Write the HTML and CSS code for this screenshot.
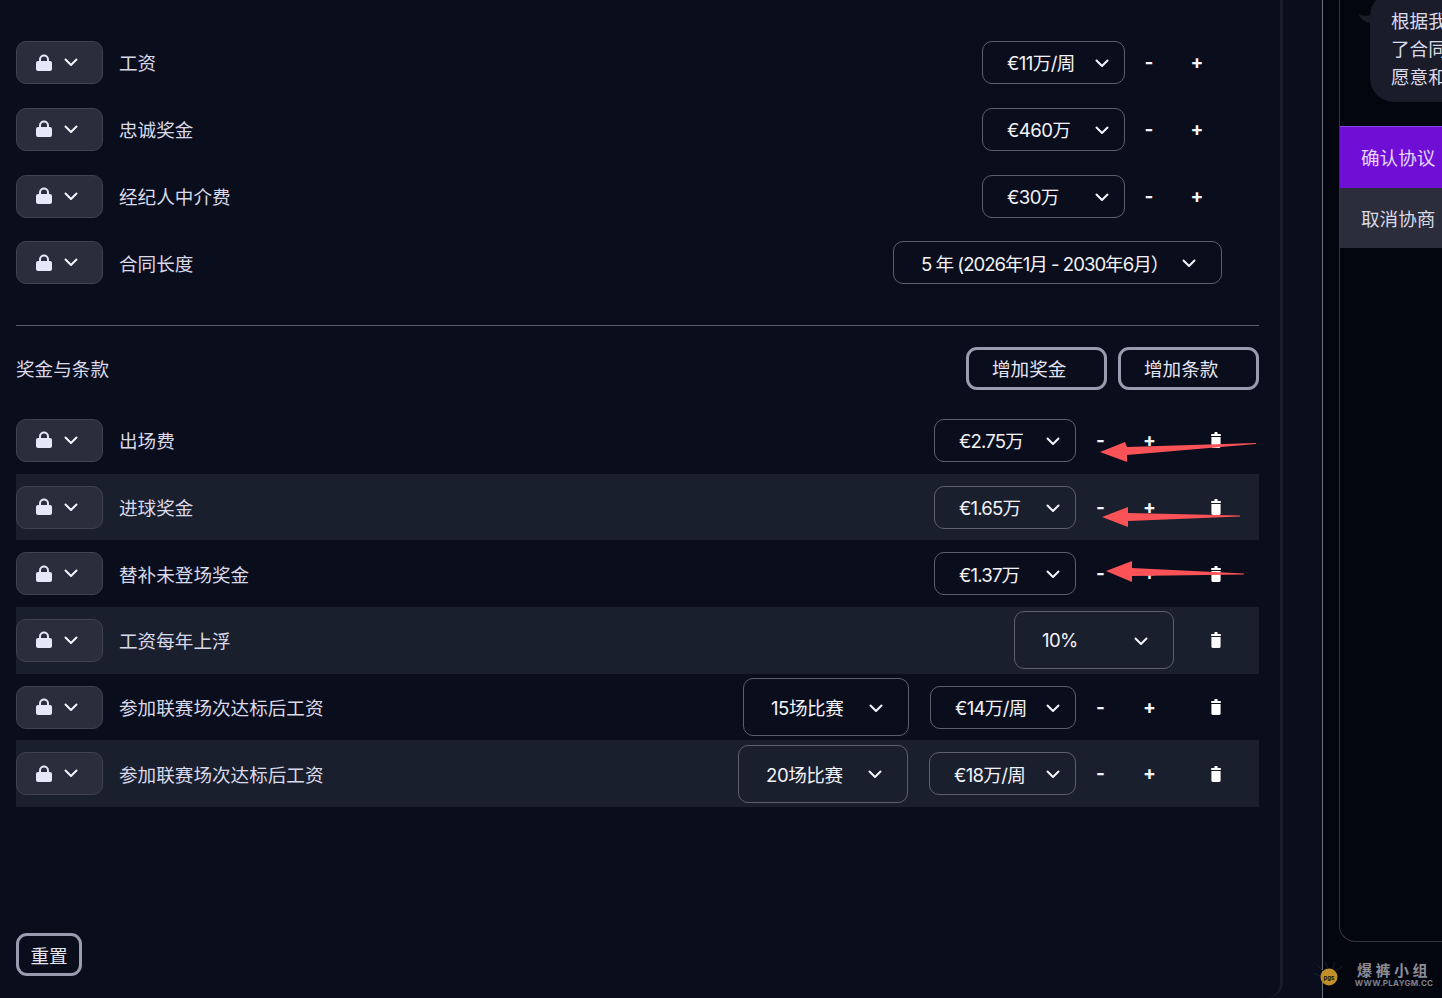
FILE: index.html
```html
<!DOCTYPE html>
<html>
<head>
    <meta charset="utf-8" />
    <title>合同协商</title>
    <meta name="viewport" content="width=device-width, initial-scale=1">
    <link rel="stylesheet" href="styles.css">
</head>
<body>
    <svg class="defs" width="0" height="0">
        <symbol id="i-lock" viewBox="0 0 16 17">
            <path d="M3 8V5.5a5 5 0 0 1 10 0V8h-2V5.5a3 3 0 0 0-6 0V8z" />
            <rect x="0" y="7" width="16" height="10" rx="2" />
        </symbol>
        <symbol id="i-chev" viewBox="0 0 14 9">
            <path d="M1.5 1.5L7 7l5.5-5.5" fill="none" stroke="currentColor" stroke-width="2" stroke-linecap="round" stroke-linejoin="round" />
        </symbol>
        <symbol id="i-trash" viewBox="0 0 10 16">
            <path d="M3.4 1Q3.4 0 4.2 0h1.6q.8 0 .8 1V2h3.2v2H.2V2h3.2z" />
            <path d="M.4 5h9.2v9.6q0 1.4-1.4 1.4H1.8q-1.4 0-1.4-1.4z" />
        </symbol>
    </svg>

    <div class="main">
        <div class="group">
            <div class="row">
                <button class="lock"><svg class="ic-lock"><use href="#i-lock" /></svg><svg class="ic-chev"><use href="#i-chev" /></svg></button>
                <div class="label first">工资</div>
                <div class="select w143"><span class="first">€11万/周</span><svg class="ic-chev"><use href="#i-chev" /></svg></div>
                <div class="step">-</div>
                <div class="step">+</div>
                <div class="end38"></div>
            </div>
            <div class="row">
                <button class="lock"><svg class="ic-lock"><use href="#i-lock" /></svg><svg class="ic-chev"><use href="#i-chev" /></svg></button>
                <div class="label">忠诚奖金</div>
                <div class="select w143"><span>€460万</span><svg class="ic-chev"><use href="#i-chev" /></svg></div>
                <div class="step">-</div>
                <div class="step">+</div>
                <div class="end38"></div>
            </div>
            <div class="row">
                <button class="lock"><svg class="ic-lock"><use href="#i-lock" /></svg><svg class="ic-chev"><use href="#i-chev" /></svg></button>
                <div class="label">经纪人中介费</div>
                <div class="select w143"><span>€30万</span><svg class="ic-chev"><use href="#i-chev" /></svg></div>
                <div class="step">-</div>
                <div class="step">+</div>
                <div class="end38"></div>
            </div>
            <div class="row">
                <button class="lock"><svg class="ic-lock"><use href="#i-lock" /></svg><svg class="ic-chev"><use href="#i-chev" /></svg></button>
                <div class="label">合同长度</div>
                <div class="select wide w329"><span>5 年 (2026年1月 - 2030年6月）</span><svg class="ic-chev"><use href="#i-chev" /></svg></div>
                <div class="end37"></div>
            </div>
        </div>

        <div class="divider"></div>

        <div class="bonus-head">
            <div class="label first">奖金与条款</div>
            <button class="outline add">增加奖金</button>
            <button class="outline add">增加条款</button>
        </div>

        <div class="group">
            <div class="row">
                <button class="lock"><svg class="ic-lock"><use href="#i-lock" /></svg><svg class="ic-chev"><use href="#i-chev" /></svg></button>
                <div class="label">出场费</div>
                <div class="select w142"><span>€2.75万</span><svg class="ic-chev"><use href="#i-chev" /></svg></div>
                <div class="step s49">-</div>
                <div class="step s49">+</div>
                <div class="del"><svg class="ic-trash"><use href="#i-trash" /></svg></div>
            </div>
            <div class="row alt">
                <button class="lock"><svg class="ic-lock"><use href="#i-lock" /></svg><svg class="ic-chev"><use href="#i-chev" /></svg></button>
                <div class="label">进球奖金</div>
                <div class="select w142"><span>€1.65万</span><svg class="ic-chev"><use href="#i-chev" /></svg></div>
                <div class="step s49">-</div>
                <div class="step s49">+</div>
                <div class="del"><svg class="ic-trash"><use href="#i-trash" /></svg></div>
            </div>
            <div class="row">
                <button class="lock"><svg class="ic-lock"><use href="#i-lock" /></svg><svg class="ic-chev"><use href="#i-chev" /></svg></button>
                <div class="label">替补未登场奖金</div>
                <div class="select w142"><span>€1.37万</span><svg class="ic-chev"><use href="#i-chev" /></svg></div>
                <div class="step s49">-</div>
                <div class="step s49">+</div>
                <div class="del"><svg class="ic-trash"><use href="#i-trash" /></svg></div>
            </div>
            <div class="row alt">
                <button class="lock"><svg class="ic-lock"><use href="#i-lock" /></svg><svg class="ic-chev"><use href="#i-chev" /></svg></button>
                <div class="label">工资每年上浮</div>
                <div class="select wide tall w160"><span>10%</span><svg class="ic-chev"><use href="#i-chev" /></svg></div>
                <div class="del"><svg class="ic-trash"><use href="#i-trash" /></svg></div>
            </div>
            <div class="row">
                <button class="lock"><svg class="ic-lock"><use href="#i-lock" /></svg><svg class="ic-chev"><use href="#i-chev" /></svg></button>
                <div class="label">参加联赛场次达标后工资</div>
                <div class="select wide tall w166"><span>15场比赛</span><svg class="ic-chev"><use href="#i-chev" /></svg></div>
                <div class="select w146"><span>€14万/周</span><svg class="ic-chev"><use href="#i-chev" /></svg></div>
                <div class="step s49">-</div>
                <div class="step s49">+</div>
                <div class="del"><svg class="ic-trash"><use href="#i-trash" /></svg></div>
            </div>
            <div class="row alt">
                <button class="lock"><svg class="ic-lock"><use href="#i-lock" /></svg><svg class="ic-chev"><use href="#i-chev" /></svg></button>
                <div class="label">参加联赛场次达标后工资</div>
                <div class="select wide tall w170"><span>20场比赛</span><svg class="ic-chev"><use href="#i-chev" /></svg></div>
                <div class="select w147"><span>€18万/周</span><svg class="ic-chev"><use href="#i-chev" /></svg></div>
                <div class="step s49">-</div>
                <div class="step s49">+</div>
                <div class="del"><svg class="ic-trash"><use href="#i-trash" /></svg></div>
            </div>
        </div>

        <button class="outline reset">重置</button>
    </div>

    <div class="gutter"></div>

    <div class="side">
        <div class="side-box">
            <div class="chat">
                <svg class="tail" width="14" height="9" viewBox="0 0 14 9"><path d="M0 0Q5 3 14 1V9Q5 9 0 0z" /></svg>
                <div class="bubble">根据我<br>了合同<br>愿意和</div>
            </div>
            <div class="action confirm">确认协议</div>
            <div class="action cancel">取消协商</div>
        </div>
    </div>

    <!-- 截图上的红色箭头 -->
    <svg class="marks" width="1442" height="998" viewBox="0 0 1442 998">
        <path d="M1100 452L1125 442L1127 447L1256 443V444L1127 455L1127 462z" />
        <path d="M1102 517L1128 507L1128 513L1240 515.500V516.500L1128 521L1128 527z" />
        <path d="M1106 571L1132 561L1132 568L1244 573.500V574.500L1132 576L1132 582z" />
    </svg>

    <div class="wm">
        <svg class="wm-coin" width="34" height="30" viewBox="0 0 34 30">
            <path class="wm-ray" d="M0 13l7 3M4 5l6 6M12 2l3 6M22 2l-2 6M30 6l-7 5" />
            <circle class="wm-ball" cx="16" cy="17" r="8.5" />
            <text class="wm-pgs" x="16" y="19.5" text-anchor="middle">pgs</text>
        </svg>
        <div class="wm-text">
            <div class="wm-cn">爆裤小组</div>
            <div class="wm-en">WWW.PLAYGM.CC</div>
        </div>
    </div>
</body>
</html>
```

FILE: styles.css
```css
*{
    margin: 0;
    padding: 0;
    box-sizing: border-box;
}
html,body{
    width: 1442px;
    height: 998px;
    overflow: hidden;
}
body{
    display: flex;
    background: #0a0e1c;
    color: #e4e4f2;
    font-family: "Inter", "Noto Sans CJK SC", sans-serif;
    font-size: 18.6px;
    position: relative;
}
button{
    font: inherit;
    color: inherit;
    background: none;
}
.defs{
    position: absolute;
}

/* left panel */
.main{
    width: 1283px;
    height: 998px;
    flex: none;
    display: flex;
    flex-direction: column;
    padding: 29.5px 21px 22px 16px;
    border-right: 3px solid #181d2b;
    border-bottom-right-radius: 16px;
}
.row{
    height: 66.67px;
    display: flex;
    align-items: center;
}
.alt{
    background: #1a1f2d;
}
.lock{
    width: 87px;
    height: 43px;
    flex: none;
    margin-right: 16px;
    display: flex;
    align-items: center;
    padding-left: 19px;
    gap: 12px;
    background: #2a2d3b;
    border: 1px solid #404250;
    border-radius: 10px;
}
.lock .ic-chev{
    margin-top: 0;
}
.ic-lock{
    width: 16px;
    height: 17px;
    margin-top: -1px;
    fill: #e7e7fa;
}
.ic-chev{
    width: 14px;
    height: 9px;
    margin-top: 2px;
    flex: none;
    color: #f4f4fb;
}
.ic-trash{
    width: 10px;
    height: 16px;
    fill: #fff;
}
.label{
    flex: 1;
    padding-bottom: 1px;
    color: #d9d9ea;
}
.select span{
    padding-bottom: 1px;
}
.label.first,
.select span.first{
    padding-bottom: 2px;
}
.select{
    height: 43px;
    flex: none;
    display: flex;
    align-items: center;
    justify-content: space-between;
    padding: 0 15px 0 24px;
    border: 1px solid #5d5f6e;
    border-radius: 10px;
    color: #f2f2f8;
    white-space: nowrap;
    letter-spacing: -0.6px;
}
.wide{
    padding: 0 25px 0 27px;
}
.tall{
    height: 58px;
}
.w142{ width: 142px; letter-spacing: -0.85px; }
.w143{ width: 143px; }
.w146{ width: 146px; margin-left: 21px; letter-spacing: -0.7px; }
.w147{ width: 147px; margin-left: 21px; letter-spacing: -0.7px; }
.w160{ width: 160px; }
.w166{ width: 166px; letter-spacing: -0.45px; }
.w170{ width: 170px; letter-spacing: -0.45px; }
.w329{ width: 329px; letter-spacing: -1px; }
.step{
    width: 48px;
    flex: none;
    text-align: center;
    font-size: 19px;
    font-weight: 700;
    color: #f4f4fb;
}
.s49{
    width: 49px;
}
.end38{
    width: 38px;
    flex: none;
}
.end37{
    width: 37px;
    flex: none;
}
.del{
    width: 84px;
    margin-right: 1px;
    flex: none;
    display: flex;
    justify-content: center;
}
.divider{
    height: 1px;
    margin-top: 29px;
    background: #5a5c6a;
}
.bonus-head{
    display: flex;
    align-items: center;
    gap: 11px;
    margin: 21px 0 17px;
}
.outline{
    height: 43px;
    border: 3px solid #9c9cb0;
    border-radius: 11px;
    color: #e4e4f2;
}
.add{
    width: 141px;
    padding: 0 0 2px 23px;
    text-align: left;
}
.reset{
    width: 66px;
    margin-top: auto;
    text-align: center;
}

/* right panel */
.gutter{
    width: 39px;
    flex: none;
}
.side{
    flex: 1;
    min-width: 0;
    padding-left: 16px;
    background: #04060f;
    border-left: 1px solid #6c6e7a;
}
.side-box{
    height: 942px;
    border-left: 1px solid #33353f;
    border-bottom: 1px solid #33353f;
    border-bottom-left-radius: 16px;
    overflow: hidden;
}
.chat{
    height: 126px;
    display: flex;
    flex-direction: column;
    padding-left: 30px;
    position: relative;
}
.tail{
    position: absolute;
    left: 18px;
    top: 14px;
    fill: #1a1c29;
}
.bubble{
    width: 120px;
    height: 110px;
    flex: none;
    margin-top: -8px;
    padding: 15px 0 0 21px;
    line-height: 28px;
    white-space: nowrap;
    background: #1a1c29;
    border-radius: 24px;
    color: #d9d9ea;
}
.action{
    display: flex;
    align-items: center;
    padding-left: 21px;
    white-space: nowrap;
}
.confirm{
    height: 62px;
    padding-bottom: 2px;
    background: #6f0fd6;
    border-top: 1px solid #8a45e0;
    color: #e6d8fb;
}
.cancel{
    height: 60px;
    padding-bottom: 1px;
    background: #2b2d3a;
    color: #d9d9e4;
}

/* overlays */
.marks{
    position: absolute;
    left: 0;
    top: 0;
    fill: #fb5257;
    pointer-events: none;
}
.wm{
    position: absolute;
    left: 1313px;
    top: 960px;
    display: flex;
    pointer-events: none;
}
.wm-ray{
    fill: none;
    stroke: #1c1e26;
    stroke-width: 1;
}
.wm-ball{
    fill: #c08f28;
}
.wm-pgs{
    font-size: 6px;
    font-weight: 700;
    fill: #1a1408;
}
.wm-text{
    width: 80px;
    margin: 2px 0 0 7px;
    text-align: center;
}
.wm-cn{
    font-size: 15px;
    line-height: 17px;
    letter-spacing: 3.5px;
    color: #8b8d99;
    font-weight: 700;
}
.wm-en{
    font-size: 8px;
    line-height: 9px;
    font-weight: 700;
    letter-spacing: 0.25px;
    color: #7f818d;
    white-space: nowrap;
}
```
